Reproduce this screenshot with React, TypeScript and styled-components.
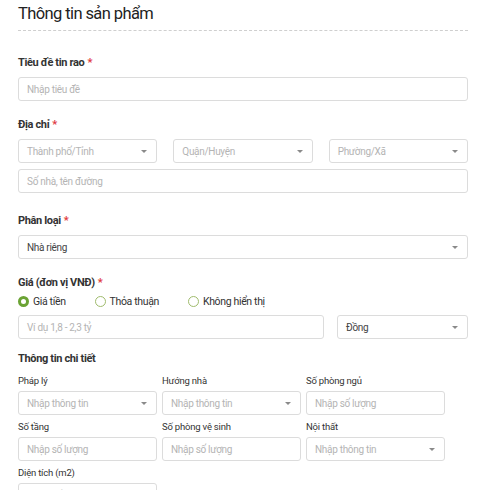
import { FC } from 'react'
import styled, { createGlobalStyle } from 'styled-components'

const GlobalStyle = createGlobalStyle`
  html, body {
    margin: 0;
    padding: 0;
    background: #fff;
    font-family: Roboto, 'Noto Sans', 'Liberation Sans', sans-serif;
    color: #333;
  }
  * { box-sizing: border-box; }
`

const Page = styled.div`
  width: 480px;
  height: 490px;
  overflow: hidden;
  padding: 2px 12px 0 18px;
`

const Title = styled.h2`
  margin: 0;
  font-size: 16.5px;
  line-height: 24px;
  font-weight: 400;
  letter-spacing: -0.6px;
  color: #222;
  padding-bottom: 4px;
  border-bottom: 1px dashed #cfcfcf;
`

const Section = styled.div<{ $top: number }>`
  margin-top: ${p => p.$top}px;
`

const Label = styled.div<{ $tight?: boolean }>`
  font-size: 11px;
  line-height: 14px;
  font-weight: 700;
  letter-spacing: -0.35px;
  color: #333;
  margin-bottom: ${p => (p.$tight ? 0 : 7)}px;
`

const Required = styled.span`
  color: #e0393e;
  margin-left: 3px;
`

const Box = styled.div<{ $value?: boolean }>`
  position: relative;
  height: 24px;
  border: 1px solid #dcdcdc;
  border-radius: 3px;
  padding: 0 8px;
  display: flex;
  align-items: center;
  font-size: 10px;
  letter-spacing: -0.3px;
  color: ${p => (p.$value ? '#444' : '#b4b4b4')};
  background: #fff;
  white-space: nowrap;
  overflow: hidden;
`

const Caret = styled.span`
  position: absolute;
  right: 9px;
  top: 10px;
  width: 0;
  height: 0;
  border-left: 3px solid transparent;
  border-right: 3px solid transparent;
  border-top: 3px solid #8a8a8a;
`

const Stack = styled.div`
  display: flex;
  flex-direction: column;
  gap: 6px;
`

const Row3 = styled.div`
  display: grid;
  grid-template-columns: repeat(3, 1fr);
  column-gap: 16px;
`

const PriceRow = styled.div`
  display: grid;
  grid-template-columns: 306px 131px;
  column-gap: 13px;
`

const Radios = styled.div`
  display: flex;
  align-items: center;
  height: 14px;
  margin: 4px 0 7px;
  gap: 29px;
`

const RadioItem = styled.label`
  display: flex;
  align-items: center;
  gap: 4px;
  font-size: 10.5px;
  letter-spacing: -0.35px;
  color: #333;
`

const RadioDot = styled.span<{ $checked?: boolean }>`
  width: 11px;
  height: 11px;
  border-radius: 50%;
  border: ${p => (p.$checked ? '3px solid #6ba334' : '1px solid #9fbb6c')};
  background: #fff;
`

const Detail = styled.div`
  display: grid;
  grid-template-columns: repeat(3, 139px);
  column-gap: 5px;
  row-gap: 6px;
  margin-top: 9px;
`

const Field = styled.div``

const SmallLabel = styled.div`
  font-size: 9.5px;
  line-height: 12px;
  letter-spacing: -0.2px;
  color: #333;
  margin-bottom: 4px;
`

const SectionTitle = styled.div`
  font-size: 11px;
  line-height: 14px;
  font-weight: 700;
  letter-spacing: -0.35px;
  color: #333;
`

type InputProps = { text: string; select?: boolean; value?: boolean }

const Input: FC<InputProps> = ({ text, select, value }) => (
  <Box $value={value}>
    {text}
    {select && <Caret />}
  </Box>
)

const details: { label: string; text: string; select?: boolean }[] = [
  { label: 'Pháp lý', text: 'Nhập thông tin', select: true },
  { label: 'Hướng nhà', text: 'Nhập thông tin', select: true },
  { label: 'Số phòng ngủ', text: 'Nhập số lượng' },
  { label: 'Số tầng', text: 'Nhập số lượng' },
  { label: 'Số phòng vệ sinh', text: 'Nhập số lượng' },
  { label: 'Nội thất', text: 'Nhập thông tin', select: true },
  { label: 'Diện tích (m2)', text: 'Nhập số lượng' },
]

const App: FC = () => (
  <Page>
    <GlobalStyle />
    <Title>Thông tin sản phẩm</Title>

    <Section $top={25}>
      <Label>
        Tiêu đề tin rao<Required>*</Required>
      </Label>
      <Input text="Nhập tiêu đề" />
    </Section>

    <Section $top={17}>
      <Label>
        Địa chỉ<Required>*</Required>
      </Label>
      <Stack>
        <Row3>
          <Input text="Thành phố/Tỉnh" select />
          <Input text="Quận/Huyện" select />
          <Input text="Phường/Xã" select />
        </Row3>
        <Input text="Số nhà, tên đường" />
      </Stack>
    </Section>

    <Section $top={21}>
      <Label>
        Phân loại<Required>*</Required>
      </Label>
      <Input text="Nhà riêng" select value />
    </Section>

    <Section $top={17}>
      <Label $tight>
        Giá (đơn vị VNĐ)<Required>*</Required>
      </Label>
      <Radios>
        <RadioItem>
          <RadioDot $checked />
          Giá tiền
        </RadioItem>
        <RadioItem>
          <RadioDot />
          Thỏa thuận
        </RadioItem>
        <RadioItem>
          <RadioDot />
          Không hiển thị
        </RadioItem>
      </Radios>
      <PriceRow>
        <Input text="Ví dụ 1,8 - 2,3 tỷ" />
        <Input text="Đồng" select value />
      </PriceRow>
    </Section>

    <Section $top={13}>
      <SectionTitle>Thông tin chi tiết</SectionTitle>
      <Detail>
        {details.map(d => (
          <Field key={d.label}>
            <SmallLabel>{d.label}</SmallLabel>
            <Input text={d.text} select={d.select} />
          </Field>
        ))}
      </Detail>
    </Section>
  </Page>
)

export default App
